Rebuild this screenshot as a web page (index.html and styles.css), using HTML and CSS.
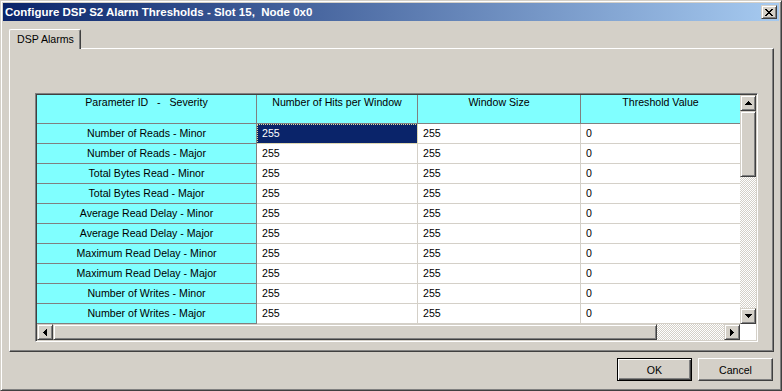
FILE: index.html
```html
<!DOCTYPE html>
<html lang="en">
<head>
    <meta charset="UTF-8">
    <title>Configure DSP S2 Alarm Thresholds</title>
    <link rel="stylesheet" href="styles.css">
</head>
<body>
    <div class="dialog">
        <div class="titlebar">
            <span class="title">Configure DSP S2 Alarm Thresholds - Slot 15,  Node 0x0</span>
            <div class="close-btn">
                <svg width="8" height="7" viewBox="0 0 8 7"><path d="M0 0h2v1H0z M6 0h2v1H6z M1 1h2v1H1z M5 1h2v1H5z M2 2h4v1H2z M3 3h2v1H3z M2 4h4v1H2z M1 5h2v1H1z M5 5h2v1H5z M0 6h2v1H0z M6 6h2v1H6z" fill="#000"/></svg>
            </div>
        </div>

        <div class="client">
            <div class="tabs">
                <div class="tab">DSP Alarms</div>
            </div>

            <div class="panel">
                <div class="grid">
                    <div class="grid-main">
                        <div class="cells">
                            <div class="head">Parameter ID   -   Severity</div>
                            <div class="head">Number of Hits per Window</div>
                            <div class="head">Window Size</div>
                            <div class="head last">Threshold Value</div>

                            <div class="rowhead">Number of Reads - Minor</div>
                            <div class="cell selected">255</div>
                            <div class="cell">255</div>
                            <div class="cell last">0</div>

                            <div class="rowhead">Number of Reads - Major</div>
                            <div class="cell">255</div>
                            <div class="cell">255</div>
                            <div class="cell last">0</div>

                            <div class="rowhead">Total Bytes Read - Minor</div>
                            <div class="cell">255</div>
                            <div class="cell">255</div>
                            <div class="cell last">0</div>

                            <div class="rowhead">Total Bytes Read - Major</div>
                            <div class="cell">255</div>
                            <div class="cell">255</div>
                            <div class="cell last">0</div>

                            <div class="rowhead">Average Read Delay - Minor</div>
                            <div class="cell">255</div>
                            <div class="cell">255</div>
                            <div class="cell last">0</div>

                            <div class="rowhead">Average Read Delay - Major</div>
                            <div class="cell">255</div>
                            <div class="cell">255</div>
                            <div class="cell last">0</div>

                            <div class="rowhead">Maximum Read Delay - Minor</div>
                            <div class="cell">255</div>
                            <div class="cell">255</div>
                            <div class="cell last">0</div>

                            <div class="rowhead">Maximum Read Delay - Major</div>
                            <div class="cell">255</div>
                            <div class="cell">255</div>
                            <div class="cell last">0</div>

                            <div class="rowhead">Number of Writes - Minor</div>
                            <div class="cell">255</div>
                            <div class="cell">255</div>
                            <div class="cell last">0</div>

                            <div class="rowhead">Number of Writes - Major</div>
                            <div class="cell">255</div>
                            <div class="cell">255</div>
                            <div class="cell last">0</div>
                        </div>

                        <!-- vertical scrollbar -->
                        <div class="vscroll">
                            <div class="sb-btn"><svg width="7" height="4" viewBox="0 0 7 4"><path d="M3 0h1v1h1v1h1v1h1v1H0V3h1V2h1V1h1z"/></svg></div>
                            <div class="thumb v-thumb"></div>
                            <div class="track"></div>
                            <div class="sb-btn"><svg width="7" height="4" viewBox="0 0 7 4"><path d="M0 0h7v1h-1v1h-1v1h-1v1H3V3H2V2H1V1H0z"/></svg></div>
                        </div>
                    </div>

                    <!-- horizontal scrollbar -->
                    <div class="grid-bottom">
                        <div class="hscroll">
                            <div class="sb-btn"><svg width="4" height="7" viewBox="0 0 4 7"><path d="M3 0h1v7H3V6H2V5H1V4H0V3h1V2h1V1h1z"/></svg></div>
                            <div class="thumb h-thumb"></div>
                            <div class="track"></div>
                            <div class="sb-btn"><svg width="4" height="7" viewBox="0 0 4 7"><path d="M0 0h1v1h1v1h1v1h1v1H3v1H2v1H1v1H0z"/></svg></div>
                        </div>
                        <div class="corner"></div>
                    </div>
                </div>
            </div>

            <div class="actions">
                <button class="btn default">OK</button>
                <button class="btn">Cancel</button>
            </div>
        </div>
    </div>
</body>
</html>
```

FILE: styles.css
```css
* {
    box-sizing: border-box;
}

body {
    margin: 0;
    font-family: "Liberation Sans", Arial, sans-serif;
    font-size: 10.6px;
    color: #000;
    background-color: #d4d0c8;
}

.dialog {
    width: 782px;
    height: 391px;
    display: flex;
    flex-direction: column;
    padding: 2px;
    background-color: #d4d0c8;
    border: 1px solid;
    border-color: #d4d0c8 #404040 #404040 #d4d0c8;
    box-shadow: inset 1px 1px #fff, inset -1px -1px #808080;
}

/* title bar */
.titlebar {
    height: 18px;
    flex: none;
    display: flex;
    align-items: center;
    justify-content: space-between;
    padding: 0 2px;
    background: linear-gradient(to right, #0a246a, #a6caf0);
}

.title {
    color: #fff;
    font-weight: bold;
    font-size: 11.5px;
    white-space: pre;
}

.close-btn,
.sb-btn,
.thumb {
    background-color: #d4d0c8;
    border: 1px solid;
    border-color: #d4d0c8 #404040 #404040 #d4d0c8;
    box-shadow: inset 1px 1px #fff, inset -1px -1px #808080;
}

.close-btn {
    width: 16px;
    height: 14px;
    display: flex;
    align-items: center;
    justify-content: center;
    padding-right: 1px;
}

/* client area */
.client {
    flex: 1;
    display: flex;
    flex-direction: column;
    padding: 8px 5px 0 6px;
}

.tabs {
    display: flex;
    height: 20px;
    margin-bottom: -1px;
}

.tab {
    position: relative;
    z-index: 1;
    width: 72px;
    height: 20px;
    padding-left: 7px;
    line-height: 18px;
    background-color: #d4d0c8;
    border-top: 1px solid #fff;
    border-left: 1px solid #fff;
    border-right: 1px solid #404040;
    border-radius: 2px 2px 0 0;
    box-shadow: inset -1px 0 #808080;
}

.panel {
    height: 304px;
    padding: 44px 0 0 25px;
    border: 1px solid;
    border-color: #fff #404040 #404040 #fff;
    box-shadow: inset -1px -1px #808080;
}

/* data grid */
.grid {
    width: 723px;
    height: 249px;
    display: flex;
    flex-direction: column;
    padding: 1px;
    background-color: #fff;
    border: 1px solid;
    border-color: #808080 #fff #fff #808080;
    box-shadow: inset 1px 1px #404040, inset -1px -1px #d4d0c8;
}

.grid-main {
    display: flex;
    height: 229px;
}

.cells {
    width: 703px;
    display: grid;
    grid-template-columns: 220px 161px 163px 159px;
    grid-template-rows: 29px repeat(10, 20px);
}

.head {
    padding-top: 1px;
    line-height: 13px;
    text-align: center;
    white-space: pre;
    background-color: #80ffff;
    border-right: 1px solid #808080;
    border-bottom: 1px solid #808080;
}

.rowhead {
    line-height: 19px;
    text-align: center;
    background-color: #80ffff;
    border-right: 1px solid #808080;
    border-bottom: 1px solid #808080;
}

.cell {
    padding-left: 5px;
    line-height: 19px;
    background-color: #fff;
    border-right: 1px solid #d4d0c8;
    border-bottom: 1px solid #d4d0c8;
}

.head.last,
.cell.last {
    border-right: none;
}

.cell.selected {
    color: #fff;
    background-color: #0a246a;
    outline: 1px dotted #e4dc9c;
    outline-offset: -1px;
}

/* scrollbars */
.vscroll {
    width: 16px;
    display: flex;
    flex-direction: column;
}

.sb-btn {
    width: 16px;
    height: 16px;
    flex: none;
    display: flex;
    align-items: center;
    justify-content: center;
}

.v-thumb {
    height: 66px;
    flex: none;
}

.h-thumb {
    width: 604px;
    flex: none;
}

.track {
    flex: 1;
    background: repeating-conic-gradient(#fff 0 25%, #d4d0c8 0 50%) 0 0 / 2px 2px;
}

.grid-bottom {
    display: flex;
    height: 16px;
}

.hscroll {
    width: 703px;
    display: flex;
}

.corner {
    width: 16px;
    background-color: #fff;
}

/* dialog buttons */
.actions {
    display: flex;
    justify-content: flex-end;
    gap: 6px;
    margin-top: 6px;
    padding-right: 1px;
}

.btn {
    width: 75px;
    height: 23px;
    font: inherit;
    color: #000;
    background-color: #d4d0c8;
    border: 1px solid;
    border-color: #fff #404040 #404040 #fff;
    box-shadow: inset -1px -1px #808080, inset 1px 1px #d4d0c8;
}

.btn.default {
    border-color: #000;
    box-shadow: inset 1px 1px #fff, inset -1px -1px #404040, inset -2px -2px #808080;
}
```
